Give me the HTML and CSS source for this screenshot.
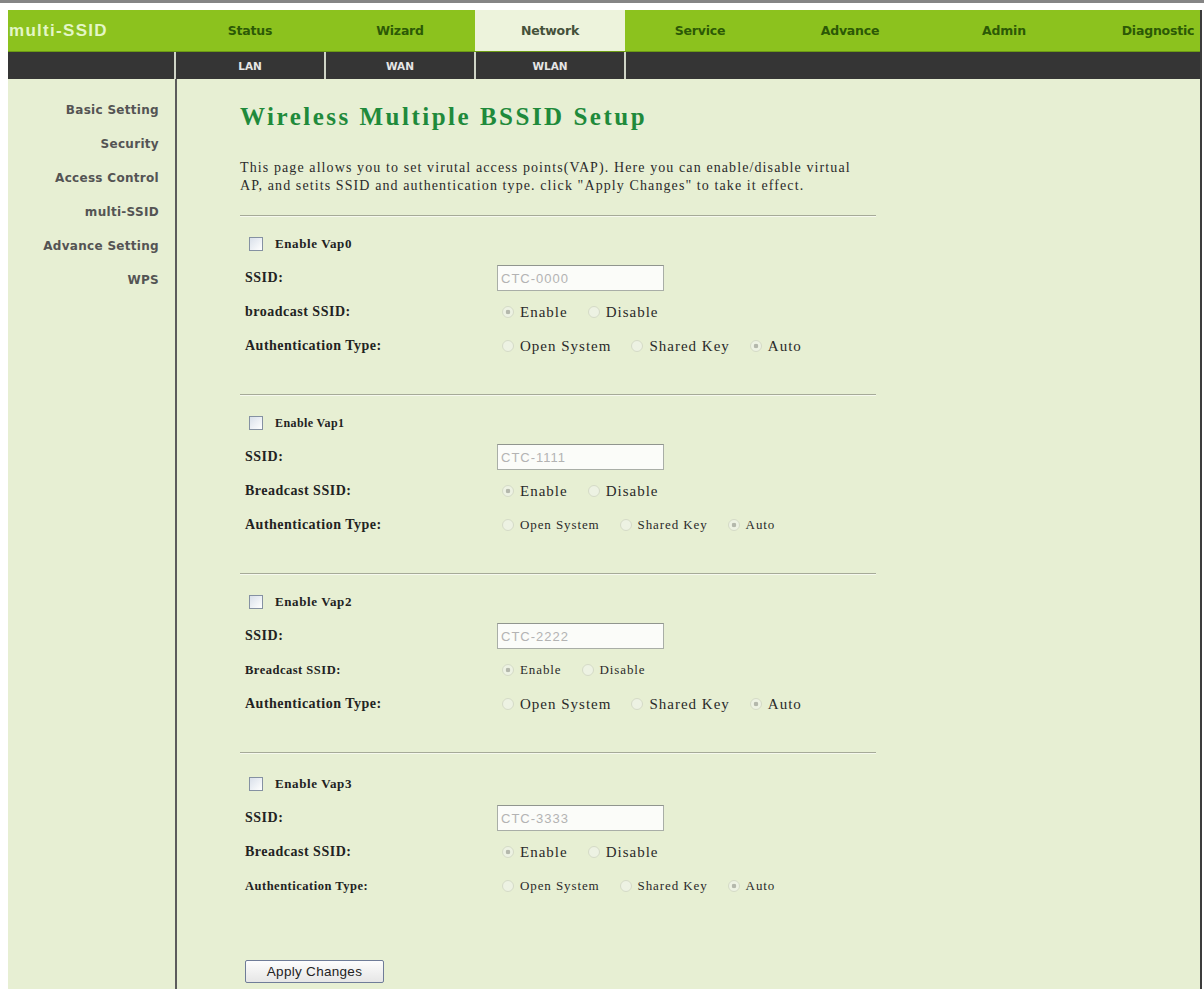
FILE: index.html
```html
<!DOCTYPE html>
<html lang="en">
<head>
<meta charset="utf-8">
<title>multi-SSID</title>
<link rel="stylesheet" href="styles.css">
</head>
<body>
<div class="page">
  <header class="menu">
    <div class="brand">multi-SSID</div>
    <a class="tab">Status</a>
    <a class="tab">Wizard</a>
    <a class="tab active">Network</a>
    <a class="tab">Service</a>
    <a class="tab">Advance</a>
    <a class="tab">Admin</a>
    <a class="tab">Diagnostic</a>
  </header>
  <nav class="submenu">
    <span class="cell"></span>
    <a class="cell">LAN</a>
    <a class="cell">WAN</a>
    <a class="cell">WLAN</a>
    <span class="cell"></span>
  </nav>
  <div class="main">
    <aside class="side">
      <a>Basic Setting</a>
      <a>Security</a>
      <a>Access Control</a>
      <a>multi-SSID</a>
      <a>Advance Setting</a>
      <a>WPS</a>
    </aside>
    <section class="content">
      <h1 class="title">Wireless Multiple BSSID Setup</h1>
      <p class="intro">This page allows you to set virutal access points(VAP). Here you can enable/disable virtual<br>AP, and setits SSID and authentication type. click "Apply Changes" to take it effect.</p>

      <hr class="rule">
      <div class="vap">
        <label class="enable"><input type="checkbox" class="check">Enable Vap0</label>
        <div class="row"><span class="lbl">SSID:</span><input class="ssid" type="text" value="CTC-0000" disabled></div>
        <div class="row"><span class="lbl">broadcast SSID:</span>
          <span class="opts">
            <label class="opt"><input type="radio" name="bc0" checked disabled>Enable</label>
            <label class="opt"><input type="radio" name="bc0" disabled>Disable</label>
          </span>
        </div>
        <div class="row"><span class="lbl">Authentication Type:</span>
          <span class="opts">
            <label class="opt"><input type="radio" name="au0" disabled>Open System</label>
            <label class="opt"><input type="radio" name="au0" disabled>Shared Key</label>
            <label class="opt"><input type="radio" name="au0" checked disabled>Auto</label>
          </span>
        </div>
      </div>

      <hr class="rule">
      <div class="vap">
        <label class="enable small"><input type="checkbox" class="check">Enable Vap1</label>
        <div class="row"><span class="lbl">SSID:</span><input class="ssid" type="text" value="CTC-1111" disabled></div>
        <div class="row"><span class="lbl">Breadcast SSID:</span>
          <span class="opts">
            <label class="opt"><input type="radio" name="bc1" checked disabled>Enable</label>
            <label class="opt"><input type="radio" name="bc1" disabled>Disable</label>
          </span>
        </div>
        <div class="row"><span class="lbl">Authentication Type:</span>
          <span class="opts small">
            <label class="opt"><input type="radio" name="au1" disabled>Open System</label>
            <label class="opt"><input type="radio" name="au1" disabled>Shared Key</label>
            <label class="opt"><input type="radio" name="au1" checked disabled>Auto</label>
          </span>
        </div>
      </div>

      <hr class="rule">
      <div class="vap">
        <label class="enable"><input type="checkbox" class="check">Enable Vap2</label>
        <div class="row"><span class="lbl">SSID:</span><input class="ssid" type="text" value="CTC-2222" disabled></div>
        <div class="row"><span class="lbl small">Breadcast SSID:</span>
          <span class="opts small">
            <label class="opt"><input type="radio" name="bc2" checked disabled>Enable</label>
            <label class="opt"><input type="radio" name="bc2" disabled>Disable</label>
          </span>
        </div>
        <div class="row"><span class="lbl">Authentication Type:</span>
          <span class="opts">
            <label class="opt"><input type="radio" name="au2" disabled>Open System</label>
            <label class="opt"><input type="radio" name="au2" disabled>Shared Key</label>
            <label class="opt"><input type="radio" name="au2" checked disabled>Auto</label>
          </span>
        </div>
      </div>

      <hr class="rule">
      <div class="vap last">
        <label class="enable"><input type="checkbox" class="check">Enable Vap3</label>
        <div class="row"><span class="lbl">SSID:</span><input class="ssid" type="text" value="CTC-3333" disabled></div>
        <div class="row"><span class="lbl">Breadcast SSID:</span>
          <span class="opts">
            <label class="opt"><input type="radio" name="bc3" checked disabled>Enable</label>
            <label class="opt"><input type="radio" name="bc3" disabled>Disable</label>
          </span>
        </div>
        <div class="row"><span class="lbl small">Authentication Type:</span>
          <span class="opts small">
            <label class="opt"><input type="radio" name="au3" disabled>Open System</label>
            <label class="opt"><input type="radio" name="au3" disabled>Shared Key</label>
            <label class="opt"><input type="radio" name="au3" checked disabled>Auto</label>
          </span>
        </div>
      </div>

      <button class="apply" type="button">Apply Changes</button>
    </section>
  </div>
</div>
</body>
</html>
```

FILE: styles.css
```css
* {
  box-sizing: border-box;
}

html,
body {
  margin: 0;
}

body {
  background: #ffffff;
  border-top: 3px solid #858585;
  padding: 7px 2px 0 8px;
  font-family: "Liberation Serif", "Times New Roman", serif;
}

.page {
  width: 1194px;
  height: 979px;
  overflow: hidden;
  border-right: 2px solid #3c3c3c;
  background: #e7efd3;
  display: flex;
  flex-direction: column;
}

/* ---- top menu ---- */
.menu {
  flex: none;
  display: grid;
  grid-template-columns: 167px repeat(5, 150px) 158px 150px;
  height: 42px;
  background: #8cc21e;
  border-bottom: 1px solid #6c9b14;
}

.brand {
  display: flex;
  align-items: center;
  padding-left: 1px;
  font-family: "Liberation Sans", Arial, sans-serif;
  font-size: 17px;
  font-weight: bold;
  letter-spacing: 1.3px;
  color: #e3f6c6;
  white-space: nowrap;
}

.tab {
  display: flex;
  align-items: center;
  justify-content: center;
  font-family: "DejaVu Sans", Verdana, sans-serif;
  font-size: 12.5px;
  font-weight: bold;
  letter-spacing: -0.2px;
  color: #2c5906;
  white-space: nowrap;
}

.tab.active {
  background: #edf3dc;
  color: #45513a;
}

/* ---- second level menu ---- */
.submenu {
  flex: none;
  display: grid;
  grid-template-columns: 166px 148px 148px 148px 1fr;
  column-gap: 2px;
  height: 27px;
  background: #cfd4c6;
}

.submenu .cell {
  display: flex;
  align-items: center;
  justify-content: center;
  background: #353535;
  font-family: "DejaVu Sans", Verdana, sans-serif;
  font-size: 10.5px;
  font-weight: bold;
  color: #e6e6e6;
}

/* ---- body ---- */
.main {
  flex: 1;
  display: flex;
}

.side {
  flex: none;
  width: 169px;
  border-right: 2px solid #5c5c5c;
  padding: 14px 16px 0 0;
}

.side a {
  display: block;
  line-height: 34px;
  text-align: right;
  font-family: "DejaVu Sans", Verdana, sans-serif;
  font-size: 12px;
  font-weight: bold;
  letter-spacing: 0.3px;
  color: #545454;
  white-space: nowrap;
}

.content {
  flex: 1;
  padding: 23px 0 0 63px;
}

.title {
  margin: 0;
  font-size: 25px;
  line-height: 30px;
  font-weight: bold;
  letter-spacing: 2.5px;
  color: #1f8a3b;
  white-space: nowrap;
}

.intro {
  margin: 27px 0 20px;
  font-size: 14px;
  line-height: 18px;
  letter-spacing: 1.1px;
  color: #2b2b2b;
  white-space: nowrap;
}

.rule {
  width: 636px;
  height: 0;
  margin: 0;
  border: none;
  border-top: 1px solid #a6aa98;
  border-bottom: 1px solid #f6f9ee;
}

.vap {
  padding: 10px 0 31px 5px;
}

.vap.last {
  padding-top: 13px;
}

.row,
.enable {
  height: 34px;
  display: flex;
  align-items: center;
  white-space: nowrap;
}

.enable {
  padding-left: 4px;
  font-size: 13px;
  font-weight: bold;
  letter-spacing: 0.6px;
  color: #222;
}

.enable.small {
  font-size: 12px;
  letter-spacing: 0.4px;
}

.check {
  appearance: none;
  width: 14px;
  height: 14px;
  margin: 0 12px 0 0;
  border: 1px solid #8591a2;
  background: linear-gradient(135deg, #d9e0ea, #ffffff);
}

.lbl {
  flex: none;
  width: 252px;
  font-size: 14px;
  font-weight: bold;
  letter-spacing: 0.5px;
  color: #222;
}

.lbl.small {
  font-size: 12.5px;
  letter-spacing: 0.5px;
}

.ssid {
  width: 167px;
  height: 26px;
  margin: 0;
  padding: 0 3px;
  border: 1px solid #a9aea7;
  border-top-color: #90958e;
  background: #fbfcf9;
  font-family: "Liberation Sans", Arial, sans-serif;
  font-size: 13px;
  letter-spacing: 1px;
  color: #b3b3b3;
}

.opts {
  display: flex;
  gap: 20px;
  margin-left: 5px;
}

.opt {
  display: flex;
  align-items: center;
  gap: 6px;
  font-size: 15px;
  letter-spacing: 1px;
  color: #2a2a2a;
}

.opts.small .opt {
  font-size: 13px;
  letter-spacing: 0.9px;
}

.opt input {
  appearance: none;
  width: 12px;
  height: 12px;
  margin: 0;
  border-radius: 50%;
  border: 1px solid #d5dbc7;
  background: #edf2e3;
}

.opt input:checked {
  background: radial-gradient(circle, #b4b8ac 0 2px, #edf2e3 2.6px);
}

.apply {
  display: block;
  width: 139px;
  height: 23px;
  margin: 26px 0 0 5px;
  border: 1px solid #6f7c98;
  border-radius: 2px;
  background: linear-gradient(#fdfdfd, #e6e6e6);
  font-family: "Liberation Sans", Arial, sans-serif;
  font-size: 13.5px;
  letter-spacing: 0.3px;
  color: #222;
}
```
